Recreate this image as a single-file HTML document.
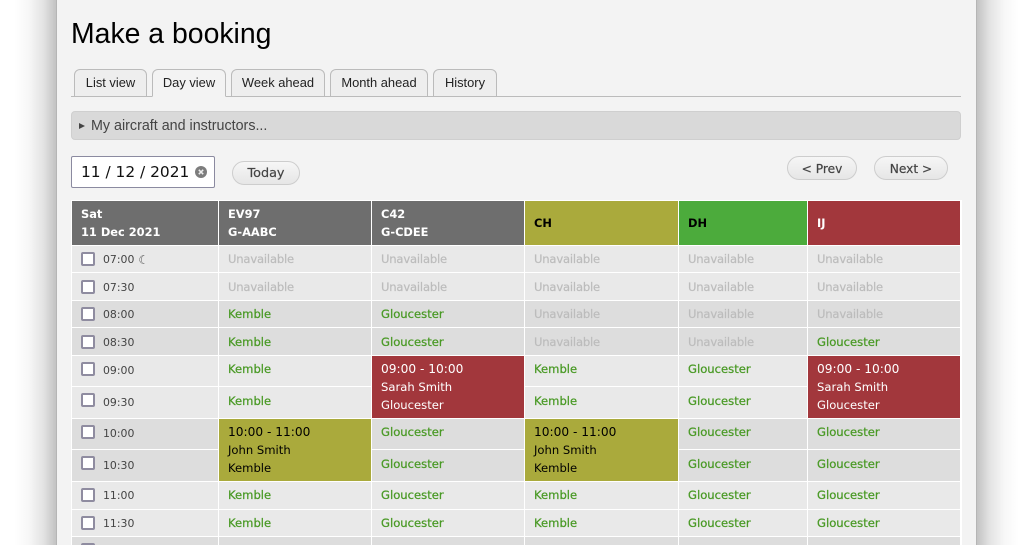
<!DOCTYPE html>
<html><head><meta charset="utf-8">
<style>
html,body{margin:0;padding:0;width:1032px;height:545px;overflow:hidden;background:#fff}
*{box-sizing:border-box}
#wrap{position:absolute;left:0;top:0;width:1032px;height:545px;overflow:hidden;background:#fff}
.abs{position:absolute}
#panel{position:absolute;left:56px;top:0;width:921px;height:545px;background:#f3f3f3;border-left:1px solid #b5b5b5;border-right:1px solid #b5b5b5}
#sl{position:absolute;left:14px;top:0;width:42px;height:545px;background:linear-gradient(to right,rgba(0,0,0,0),rgba(0,0,0,.03) 35%,rgba(0,0,0,.11) 70%,rgba(0,0,0,.24))}
#sr{position:absolute;left:977px;top:0;width:42px;height:545px;background:linear-gradient(to left,rgba(0,0,0,0),rgba(0,0,0,.03) 35%,rgba(0,0,0,.11) 70%,rgba(0,0,0,.24))}
h1{position:absolute;left:71px;top:17px;margin:0;font:normal 28.4px/34px "Liberation Sans",sans-serif;color:#000}
.tab{position:absolute;top:69px;height:28px;border:1px solid #bbb;border-radius:6px 6px 0 0;background:#eee;font:12.9px/26px "Liberation Sans",sans-serif;color:#222;text-align:center}
.tab.on{background:#f3f3f3;border-bottom:1px solid #f3f3f3;z-index:2}
#line{position:absolute;left:71px;top:96px;width:890px;height:1px;background:#bbb}
#acc{position:absolute;left:71px;top:111px;width:890px;height:29px;background:#d9d9d9;border:1px solid #cfcfcf;border-radius:4px;font:14.3px/28px "Liberation Sans",sans-serif;color:#444;padding-left:19px}
#tri{position:absolute;left:79px;top:123px;width:0;height:0;border-left:6px solid #444;border-top:3.5px solid transparent;border-bottom:3.5px solid transparent}
#date{position:absolute;left:71px;top:156px;width:144px;height:32px;background:#fff;border:1px solid #8b8aa0;border-radius:2px;font:15.4px/30px "DejaVu Sans",sans-serif;color:#111;padding-left:9px;white-space:nowrap}
.btn{position:absolute;height:24px;border:1px solid #cdcdcd;border-radius:12px;background:linear-gradient(#f6f6f6,#e6e6e6);font:12.2px/24px "DejaVu Sans",sans-serif;color:#444;text-align:center;white-space:nowrap;-webkit-text-stroke:.2px #444}
#g{position:absolute;left:71px;top:200px;width:891px;height:345px;background:#fff;padding:1px 1px 0;display:grid;gap:1px;
grid-template-columns:146px 152px 152px 153px 128px 152px;
grid-template-rows:44px 26px 27px 26px 27px 30px 31px 30px 31px 27px 26px 8px;
font:11.6px/18px "DejaVu Sans",sans-serif}
#g>div{padding:0 0 0 9px;display:flex;align-items:center;white-space:nowrap;overflow:hidden}
#g>div.tl{padding-bottom:4px}
#g>div.nr{padding-bottom:2px}
.h{background:#6e6e6e;color:#fff;font-weight:bold;line-height:18px;font-size:11.4px}
.h,.b{flex-direction:column;align-items:flex-start!important;justify-content:center}
.ol{background:#aaaa3c;color:#000}.gr{background:#4cab3c;color:#000}.rd{background:#a2373c;color:#fff}
.b span:first-child{font-size:12.2px}
.l{background:#e9e9e9}.d{background:#dddddd}
.k{color:#4a9a26;-webkit-text-stroke:.25px #4a9a26}.u{color:#bcbcbc;-webkit-text-stroke:.2px #bcbcbc;letter-spacing:-.2px}
#g>div.t{color:#444;font-size:10.9px;padding-top:2px}
#g>div.t.tl,#g>div.t.nr{padding-bottom:2px;padding-top:2px}
.c{display:inline-block;width:14px;height:14px;background:#fff;border:2px solid #8f8ca0;border-radius:2px;margin-right:8px;margin-top:-2px;flex:none}
.tl .c{margin-top:-5px}
.pk{position:absolute;top:5px;font-size:11.6px;line-height:18px}
.m{font-size:12px;margin-left:4px;color:#555}
</style></head><body>
<div id="wrap">
<div id="sl"></div><div id="sr"></div>
<div id="panel"></div>
<h1>Make a booking</h1>
<div id="line"></div>
<div class="tab" style="left:74px;width:73px">List view</div>
<div class="tab on" style="left:152px;width:74px">Day view</div>
<div class="tab" style="left:231px;width:94px">Week ahead</div>
<div class="tab" style="left:330px;width:98px">Month ahead</div>
<div class="tab" style="left:433px;width:64px">History</div>
<div id="acc">My aircraft and instructors...</div><div id="tri"></div>
<div id="date">11 / 12 / 2021</div>
<svg class="abs" style="left:195px;top:166px" width="12" height="12" viewBox="0 0 12 12"><circle cx="6" cy="6" r="6" fill="#7d7d7d"/><path d="M3.8 3.8L8.2 8.2M8.2 3.8L3.8 8.2" stroke="#eee" stroke-width="1.5"/></svg>
<div class="btn" style="left:232px;top:161px;width:68px;font-size:12.8px">Today</div>
<div class="btn" style="left:787px;top:156px;width:70px">&lt; Prev</div>
<div class="btn" style="left:874px;top:156px;width:74px">Next &gt;</div>
<div id="g">
<div class="h"><span>Sat</span><span>11 Dec 2021</span></div>
<div class="h"><span>EV97</span><span>G-AABC</span></div>
<div class="h"><span>C42</span><span>G-CDEE</span></div>
<div class="h ol" style="color:#000"><span>CH</span></div>
<div class="h gr" style="color:#000"><span>DH</span></div>
<div class="h rd"><span>IJ</span></div>

<div class="l t"><i class="c"></i>07:00<span class="m">☾</span></div><div class="l u">Unavailable</div><div class="l u">Unavailable</div><div class="l u">Unavailable</div><div class="l u">Unavailable</div><div class="l u">Unavailable</div>
<div class="l t"><i class="c"></i>07:30</div><div class="l u">Unavailable</div><div class="l u">Unavailable</div><div class="l u">Unavailable</div><div class="l u">Unavailable</div><div class="l u">Unavailable</div>
<div class="d t"><i class="c"></i>08:00</div><div class="d k">Kemble</div><div class="d k">Gloucester</div><div class="d u">Unavailable</div><div class="d u">Unavailable</div><div class="d u">Unavailable</div>
<div class="d t"><i class="c"></i>08:30</div><div class="d k">Kemble</div><div class="d k">Gloucester</div><div class="d u">Unavailable</div><div class="d u">Unavailable</div><div class="d k">Gloucester</div>

<div class="l t tl"><i class="c"></i>09:00</div><div class="l k tl">Kemble</div>
<div class="b rd" style="grid-row:span 2"><span>09:00 - 10:00</span><span>Sarah Smith</span><span>Gloucester</span></div>
<div class="l k tl">Kemble</div><div class="l k tl">Gloucester</div>
<div class="b rd" style="grid-row:span 2"><span>09:00 - 10:00</span><span>Sarah Smith</span><span>Gloucester</span></div>

<div class="l t tl"><i class="c"></i>09:30</div><div class="l k tl">Kemble</div><div class="l k tl">Kemble</div><div class="l k tl">Gloucester</div>

<div class="d t tl"><i class="c"></i>10:00</div>
<div class="b ol" style="grid-row:span 2"><span>10:00 - 11:00</span><span>John Smith</span><span>Kemble</span></div>
<div class="d k tl">Gloucester</div>
<div class="b ol" style="grid-row:span 2"><span>10:00 - 11:00</span><span>John Smith</span><span>Kemble</span></div>
<div class="d k tl">Gloucester</div><div class="d k tl">Gloucester</div>

<div class="d t tl"><i class="c"></i>10:30</div><div class="d k tl">Gloucester</div><div class="d k tl">Gloucester</div><div class="d k tl">Gloucester</div>

<div class="l t nr"><i class="c"></i>11:00</div><div class="l k nr">Kemble</div><div class="l k nr">Gloucester</div><div class="l k nr">Kemble</div><div class="l k nr">Gloucester</div><div class="l k nr">Gloucester</div>
<div class="l t"><i class="c"></i>11:30</div><div class="l k">Kemble</div><div class="l k">Gloucester</div><div class="l k">Kemble</div><div class="l k">Gloucester</div><div class="l k">Gloucester</div>

<div class="d" style="position:relative"><i class="c" style="position:absolute;left:9px;top:6px;margin:0"></i></div>
<div class="d k" style="position:relative"><span class="pk">Kemble</span></div>
<div class="d k" style="position:relative"><span class="pk">Gloucester</span></div>
<div class="d k" style="position:relative"><span class="pk">Kemble</span></div>
<div class="d k" style="position:relative"><span class="pk">Gloucester</span></div>
<div class="d k" style="position:relative"><span class="pk">Gloucester</span></div>
</div>
</div>
</body></html>
